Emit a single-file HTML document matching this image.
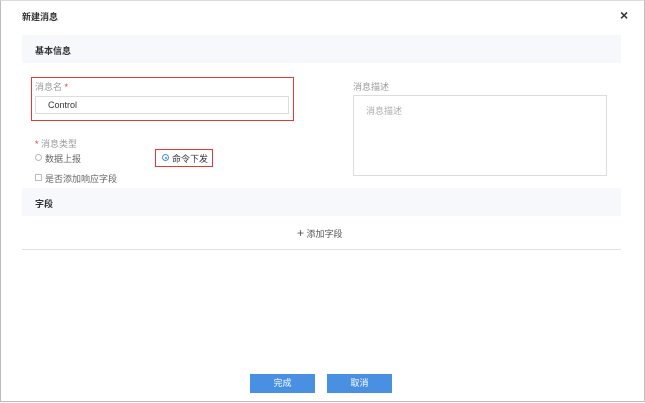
<!DOCTYPE html>
<html><head><meta charset="utf-8"><style>
*{margin:0;padding:0;box-sizing:border-box}
body{width:645px;height:403px;background:#fff;font-family:"Liberation Sans","Noto Sans CJK SC",sans-serif;position:relative;overflow:hidden;font-size:9px;color:#333}
.a{position:absolute}
.frame{left:0;top:0;width:645px;height:402px;border:1px solid #bdbdbd;border-top:1px solid #ddd}
.hdr{left:22px;width:599px;height:28px;background:#f7f8fc}
.hdr span{position:absolute;left:13px;top:9px;font-weight:bold;font-size:9px;color:#333}
.lbl{color:#999;font-size:9px}
.red{border:1.5px solid #e53935}
.btn{top:374px;width:65px;height:19px;background:#4a90e2;color:#fff;text-align:center;line-height:19px;font-size:9px}
</style></head><body>
<div class="a frame"></div>
<div class="a" style="left:22px;top:10px;font-weight:bold;font-size:9px">新建消息</div>
<div class="a" style="left:620px;top:7px;font-size:14px;font-weight:bold;color:#333">×</div>
<div class="a hdr" style="top:35px"><span>基本信息</span></div>
<div class="a red" style="left:31px;top:77px;width:263px;height:44px"></div>
<div class="a lbl" style="left:35px;top:80px">消息名 <span style="color:#e53935">*</span></div>
<div class="a" style="left:35px;top:96px;width:254px;height:18px;border:1px solid #ddd;padding-left:12px;line-height:16px;color:#333">Control</div>
<div class="a lbl" style="left:35px;top:137px"><span style="color:#e53935">*</span> 消息类型</div>
<div class="a" style="left:35px;top:154px;width:7px;height:7px;border:1px solid #bbb;border-radius:50%"></div>
<div class="a lbl" style="left:45px;top:152px;color:#666">数据上报</div>
<div class="a red" style="left:155px;top:149px;width:58px;height:18px"></div>
<div class="a" style="left:162px;top:154px;width:7px;height:7px;border:1px solid #4a90e2;border-radius:50%"><div style="margin:1.5px;width:2px;height:2px;background:#4a90e2;border-radius:50%"></div></div>
<div class="a" style="left:172px;top:152px;color:#333">命令下发</div>
<div class="a" style="left:35px;top:174px;width:7px;height:7px;border:1px solid #bbb"></div>
<div class="a" style="left:45px;top:172px;color:#666">是否添加响应字段</div>
<div class="a lbl" style="left:353px;top:80px">消息描述</div>
<div class="a" style="left:353px;top:95px;width:254px;height:81px;border:1px solid #ddd"></div>
<div class="a lbl" style="left:366px;top:104px;color:#aaa">消息描述</div>
<div class="a hdr" style="top:188px"><span>字段</span></div>
<div class="a" style="left:297px;top:227px;color:#555"><span style="font-size:12px;line-height:9px">+</span> 添加字段</div>
<div class="a" style="left:22px;top:249px;width:599px;height:1px;background:#e0e0e0"></div>
<div class="a btn" style="left:250px">完成</div>
<div class="a btn" style="left:327px">取消</div>
</body></html>
